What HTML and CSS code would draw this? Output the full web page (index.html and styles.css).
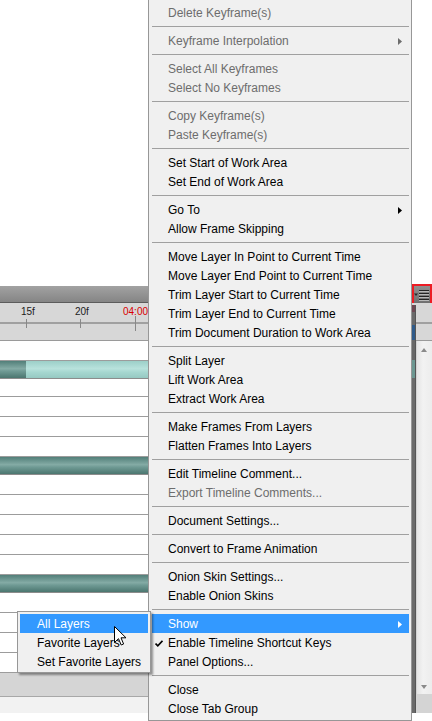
FILE: index.html
```html
<!DOCTYPE html>
<html lang="en">
<head>
  <meta charset="UTF-8" />
  <title>Timeline - Panel Menu</title>
  <link rel="stylesheet" href="styles.css">
</head>
<body>

<div class="desk"></div>

<section class="timeline">
  <div class="tl-head">
    <div class="flyout-btn" title="Panel menu">
      <svg width="16" height="18" viewBox="0 0 16 18" aria-hidden="true">
        <path d="M0 7.5 H4 L2 10 Z" fill="#2a2a2a"/>
        <rect x="5" y="4" width="10" height="1" fill="#262626"/>
        <rect x="5" y="5" width="10" height="1" fill="#b9b9b9"/>
        <rect x="5" y="7" width="10" height="1" fill="#262626"/>
        <rect x="5" y="8" width="10" height="1" fill="#b9b9b9"/>
        <rect x="5" y="10" width="10" height="1" fill="#262626"/>
        <rect x="5" y="11" width="10" height="1" fill="#b9b9b9"/>
        <rect x="5" y="13" width="10" height="1" fill="#262626"/>
        <rect x="5" y="14" width="10" height="1" fill="#b9b9b9"/>
      </svg>
    </div>
  </div>

  <div class="ruler">
    <span class="axis"></span>
    <span class="tick" style="left: 26px;"></span>
    <span class="tick" style="left: 80px;"></span>
    <span class="tick major" style="left: 135px;"></span>
    <span class="tick-label" style="left: 21px;">15f</span>
    <span class="tick-label" style="left: 75px;">20f</span>
    <span class="tick-label sec" style="left: 123px;">04:00</span>
  </div>

  <div class="tl-body">
    <div class="tracks">
      <div class="row"></div>
      <div class="row clip"><span class="clip-head"></span><span class="clip-tail"></span></div>
      <div class="row short"></div>
      <div class="row"></div>
      <div class="row"></div>
      <div class="row"></div>
      <div class="row clip"><span class="clip-head full"></span></div>
      <div class="row"></div>
      <div class="row"></div>
      <div class="row"></div>
      <div class="row"></div>
      <div class="row"></div>
      <div class="row clip"><span class="clip-head full"></span></div>
      <div class="row"></div>
      <div class="row"></div>
      <div class="row"></div>
      <div class="row"></div>
      <div class="tracks-foot"></div>
    </div>
    <div class="vscroll">
      <span class="arrow up"></span>
      <span class="arrow down"></span>
    </div>
  </div>

  <div class="tl-foot"></div>

  <!-- drop shadow of the open menu falling on the panel -->
  <span class="menu-shade"></span>
</section>

<div class="menu" role="menu">
  <div class="mi off">Delete Keyframe(s)</div>
  <div class="sep"></div>
  <div class="mi off">Keyframe Interpolation<svg class="sub" width="4" height="7" viewBox="0 0 4 7"><path d="M0 0 L4 3.5 L0 7 Z"/></svg></div>
  <div class="sep"></div>
  <div class="mi off">Select All Keyframes</div>
  <div class="mi off">Select No Keyframes</div>
  <div class="sep"></div>
  <div class="mi off">Copy Keyframe(s)</div>
  <div class="mi off">Paste Keyframe(s)</div>
  <div class="sep"></div>
  <div class="mi">Set Start of Work Area</div>
  <div class="mi">Set End of Work Area</div>
  <div class="sep"></div>
  <div class="mi">Go To<svg class="sub" width="4" height="7" viewBox="0 0 4 7"><path d="M0 0 L4 3.5 L0 7 Z"/></svg></div>
  <div class="mi">Allow Frame Skipping</div>
  <div class="sep"></div>
  <div class="mi">Move Layer In Point to Current Time</div>
  <div class="mi">Move Layer End Point to Current Time</div>
  <div class="mi">Trim Layer Start to Current Time</div>
  <div class="mi">Trim Layer End to Current Time</div>
  <div class="mi">Trim Document Duration to Work Area</div>
  <div class="sep"></div>
  <div class="mi">Split Layer</div>
  <div class="mi">Lift Work Area</div>
  <div class="mi">Extract Work Area</div>
  <div class="sep"></div>
  <div class="mi">Make Frames From Layers</div>
  <div class="mi">Flatten Frames Into Layers</div>
  <div class="sep"></div>
  <div class="mi">Edit Timeline Comment...</div>
  <div class="mi off">Export Timeline Comments...</div>
  <div class="sep"></div>
  <div class="mi">Document Settings...</div>
  <div class="sep"></div>
  <div class="mi">Convert to Frame Animation</div>
  <div class="sep"></div>
  <div class="mi">Onion Skin Settings...</div>
  <div class="mi">Enable Onion Skins</div>
  <div class="sep"></div>
  <div class="mi hot">Show<svg class="sub" width="4" height="7" viewBox="0 0 4 7"><path d="M0 0 L4 3.5 L0 7 Z"/></svg></div>
  <div class="mi"><svg class="check" width="8" height="7" viewBox="0 0 8 7"><path d="M0.5 3.5 L2.8 5.8 L7.5 0.8" fill="none" stroke="#000" stroke-width="1.7"/></svg>Enable Timeline Shortcut Keys</div>
  <div class="mi">Panel Options...</div>
  <div class="sep"></div>
  <div class="mi">Close</div>
  <div class="mi">Close Tab Group</div>
</div>

<div class="menu submenu" role="menu">
  <div class="mi hot">All Layers</div>
  <div class="mi">Favorite Layers</div>
  <div class="mi">Set Favorite Layers</div>
</div>

<svg class="pointer" width="13" height="21" viewBox="0 0 13 21" aria-hidden="true">
  <path d="M0.5 0.5 V16.5 L4.5 12.7 L7.2 19 L9.6 18 L7 11.8 H12 Z" fill="#fff" stroke="#000" stroke-width="1" stroke-linejoin="miter"/>
</svg>

</body>
</html>
```

FILE: styles.css
```css
* {
  box-sizing: border-box;
}

html, body {
  margin: 0;
  padding: 0;
}

body {
  width: 432px;
  height: 721px;
  overflow: hidden;
  position: relative;
  background: #fff;
  font-family: "Liberation Sans", Arial, sans-serif;
  font-size: 12px;
  color: #000;
}

.desk {
  height: 286px;
}

/* Timeline panel */
.timeline {
  position: relative;
  height: 427px;
  display: flex;
  flex-direction: column;
}

.tl-head {
  position: relative;
  height: 17px;
  flex-shrink: 0;
  background: linear-gradient(#a2a2a2, #858585);
  border-bottom: 1px solid #5c5c5c;
}

.flyout-btn {
  position: absolute;
  left: 412px;
  top: -2px;
  width: 20px;
  height: 22px;
  border: 2px solid #ec1c24;
  background: linear-gradient(#909090, #6e6e6e);
  padding: 0;
}

.flyout-btn svg {
  display: block;
}

.ruler {
  position: relative;
  height: 38px;
  flex-shrink: 0;
  background: #d7d7d7;
  border-bottom: 1px solid #9a9a9a;
}

.axis {
  position: absolute;
  left: 0;
  right: 0;
  top: 19px;
  height: 2px;
  background: #a0a0a0;
}

.tick {
  position: absolute;
  top: 16px;
  width: 1px;
  height: 9px;
  background: #888;
}

.tick.major {
  top: 13px;
  height: 15px;
}

.tick-label {
  position: absolute;
  top: 4px;
  font-size: 10px;
  line-height: 10px;
  color: #1b1b1b;
}

.tick-label.sec {
  color: #d90000;
}

.tl-body {
  display: flex;
  height: 356px;
  flex-shrink: 0;
}

.tracks {
  flex: 1;
  display: flex;
  flex-direction: column;
}

.row {
  height: 20px;
  flex-shrink: 0;
  background: #fff;
  border-bottom: 1px solid #9c9c9c;
  display: flex;
}

.row.short {
  height: 18px;
}

.row.clip {
  height: 18px;
  border-bottom-color: #8c8c8c;
}

.clip-head {
  width: 26px;
  background: linear-gradient(#527f79, #84aba5 45%, #6f9a94 60%, #4b766f);
}

.clip-head.full {
  flex: 1;
}

.clip-tail {
  flex: 1;
  background: linear-gradient(#9ccfc8, #b8e2dc 45%, #a6d7d0 65%, #96c9c2);
}

.tracks-foot {
  height: 24px;
  flex-shrink: 0;
  background: #d5d5d5;
  border-bottom: 1px solid #a8a8a8;
}

.vscroll {
  position: relative;
  width: 16px;
  background: linear-gradient(to right, #e4e4e4, #f2f2f2 40%, #ececec);
  border-left: 1px solid #d2d2d2;
  border-bottom: 3px solid #d4d4d4;
}

.arrow {
  position: absolute;
  left: 4px;
  width: 0;
  height: 0;
  border-left: 3.5px solid transparent;
  border-right: 3.5px solid transparent;
}

.arrow.up {
  top: 7px;
  border-bottom: 4px solid #8a8a8a;
}

.arrow.down {
  bottom: 5px;
  border-top: 4px solid #8a8a8a;
}

.tl-foot {
  height: 16px;
  flex-shrink: 0;
  background: linear-gradient(to right, #f2f2f2 0 412px, #d4d4d4 412px);
}

.menu-shade {
  position: absolute;
  left: 412px;
  top: 19px;
  bottom: 0;
  width: 4px;
  background: linear-gradient(#6e4853 0 7px, #6a6a6a 7px 20px, #2f5b8a 20px 35px, #676767 35px 55px, #6c9791 55px 73px, #6a6a6a 73px);
  border-right: 1px solid #555;
}

/* Context menus */
.menu {
  position: absolute;
  left: 148px;
  top: -1px;
  width: 264px;
  padding: 3px 0 2px;
  background: #f0f0f0;
  border: 1px solid #979797;
}

.mi {
  position: relative;
  display: flex;
  align-items: center;
  height: 19px;
  margin: 0 2px 0 3px;
  padding: 1px 0 0 16px;
  line-height: 18px;
  white-space: nowrap;
}

.mi.off {
  color: #6d6d6d;
}

.mi.hot {
  background: #3399ff;
  color: #fff;
}

.sub {
  margin-left: auto;
  margin-right: 7px;
  fill: #000;
}

.mi.off .sub {
  fill: #6d6d6d;
}

.mi.hot .sub {
  fill: #fff;
}

.check {
  position: absolute;
  left: 3px;
  top: 7px;
}

.sep {
  height: 0;
  margin: 4px 2px 4px 3px;
  border-top: 1px solid #a0a0a0;
}

.submenu {
  left: 17px;
  top: 611px;
  width: 134px;
  padding: 2px 0 1px;
  box-shadow: 2px 2px 2px rgba(0, 0, 0, 0.4);
}

.submenu .mi {
  margin: 0 2px;
  padding-left: 17px;
}

.pointer {
  position: absolute;
  left: 114px;
  top: 626px;
}
```
